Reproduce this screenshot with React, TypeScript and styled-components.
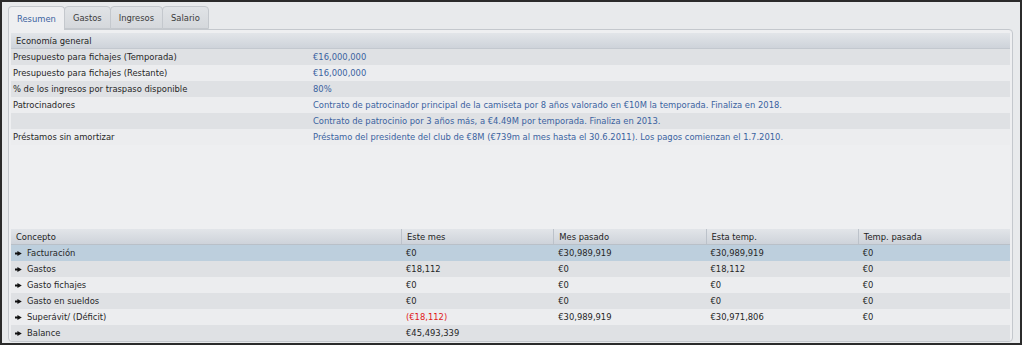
import React from 'react';
import styled, { createGlobalStyle } from 'styled-components';

const GlobalStyle = createGlobalStyle`
  html, body {
    margin: 0;
    padding: 0;
    background: #2b2b2b;
  }
  * {
    box-sizing: border-box;
  }
`;

type InfoItem = { label: string, value: string };

const infoRows: InfoItem[] = [
  { label: 'Presupuesto para fichajes (Temporada)', value: '€16,000,000' },
  { label: 'Presupuesto para fichajes (Restante)', value: '€16,000,000' },
  { label: '% de los ingresos por traspaso disponible', value: '80%' },
  { label: 'Patrocinadores', value: 'Contrato de patrocinador principal de la camiseta por 8 años valorado en €10M la temporada. Finaliza en 2018.' },
  { label: '', value: 'Contrato de patrocinio por 3 años más, a €4.49M por temporada. Finaliza en 2013.' },
  { label: 'Préstamos sin amortizar', value: 'Préstamo del presidente del club de €8M (€739m al mes hasta el 30.6.2011). Los pagos comienzan el 1.7.2010.' },
];

type Concept = { name: string, values: string[], negative?: number[] };

const concepts: Concept[] = [
  { name: 'Facturación', values: ['€0', '€30,989,919', '€30,989,919', '€0'] },
  { name: 'Gastos', values: ['€18,112', '€0', '€18,112', '€0'] },
  { name: 'Gasto fichajes', values: ['€0', '€0', '€0', '€0'] },
  { name: 'Gasto en sueldos', values: ['€0', '€0', '€0', '€0'] },
  { name: 'Superávit/ (Déficit)', values: ['(€18,112)', '€30,989,919', '€30,971,806', '€0'], negative: [0] },
  { name: 'Balance', values: ['€45,493,339', '', '', ''] },
];

const columns = ['Concepto', 'Este mes', 'Mes pasado', 'Esta temp.', 'Temp. pasada'];
const tabs = ['Resumen', 'Gastos', 'Ingresos', 'Salario'];

const Arrow = () => (
  <svg width="7" height="5" viewBox="0 0 7 5">
    <path d="M0 1.4 H2.4 V0 L6.8 2.5 L2.4 5 V3.6 H0 Z" fill="#111" />
  </svg>
);

export default function App() {
  return (
    <Frame>
      <GlobalStyle />
      <TabBar>
        {tabs.map((tab, i) => (
          <Tab key={tab} $active={i === 0}>{tab}</Tab>
        ))}
      </TabBar>
      <Panel>
        <SectionHeader>Economía general</SectionHeader>
        {infoRows.map((row, i) => (
          <InfoRow key={i} $odd={i % 2 === 0}>
            <Label>{row.label}</Label>
            <Value>{row.value}</Value>
          </InfoRow>
        ))}
        <Spacer />
        <HeadRow>
          {columns.map((c) => (
            <HeadCell key={c}>{c}</HeadCell>
          ))}
        </HeadRow>
        {concepts.map((item, i) => (
          <DataRow key={item.name} $odd={i % 2 === 1} $selected={i === 0}>
            <NameCell>
              <Arrow />
              <span>{item.name}</span>
            </NameCell>
            {item.values.map((v, j) => (
              <DataCell key={j} $negative={!!item.negative && item.negative.includes(j)}>{v}</DataCell>
            ))}
          </DataRow>
        ))}
      </Panel>
    </Frame>
  );
}

const Frame = styled.div`
  margin: 2px;
  height: 341px;
  background: #e8eaec;
  padding: 4px 7px 1px 6px;
  display: flex;
  flex-direction: column;
  font-family: "DejaVu Sans", "Noto Sans", sans-serif;
  font-size: 8.4px;
  color: #262626;
`;

const TabBar = styled.div`
  display: flex;
  height: 24px;
  position: relative;
  z-index: 1;
  margin-bottom: -1px;
`;

const Tab = styled.div<{ $active?: boolean }>`
  display: flex;
  align-items: center;
  padding: 0 8px;
  height: ${(p) => (p.$active ? '24px' : '23px')};
  border: 1px solid #c4c8cd;
  border-bottom: ${(p) => (p.$active ? 'none' : '1px solid #c4c8cd')};
  border-radius: 4px 4px 0 0;
  margin-right: -1px;
  background: ${(p) => (p.$active ? '#eeeff1' : 'linear-gradient(#e0e3e6, #d5d8dc)')};
  color: ${(p) => (p.$active ? '#3a62a0' : '#3a3a3a')};
`;

const Panel = styled.div`
  flex: 1;
  display: flex;
  flex-direction: column;
  background: #eeeff1;
  border: 1px solid #c4c8cd;
  border-radius: 0 4px 4px 4px;
  padding: 3px 2px 0 2px;
`;

const SectionHeader = styled.div`
  height: 16px;
  display: flex;
  align-items: center;
  padding-left: 5px;
  background: linear-gradient(#e2e5e9, #ced3da);
  border-bottom: 1px solid #c3c8cf;
  color: #222;
`;

const InfoRow = styled.div<{ $odd?: boolean }>`
  display: grid;
  grid-template-columns: 302px 1fr;
  height: 16px;
  align-items: center;
  background: ${(p) => (p.$odd ? '#dfe1e4' : '#ecedef')};
`;

const Label = styled.div`
  padding-left: 2px;
  white-space: nowrap;
`;

const Value = styled.div`
  color: #3a62a0;
  white-space: nowrap;
`;

const Spacer = styled.div`
  flex: 1;
`;

const HeadRow = styled.div`
  display: grid;
  grid-template-columns: 390px repeat(4, 1fr);
  height: 16px;
  background: linear-gradient(#e2e5e9, #ced3da);
  border-bottom: 1px solid #b9c0c8;
`;

const HeadCell = styled.div`
  display: flex;
  align-items: center;
  padding-left: 5px;
  border-left: 1px solid #bcc2ca;
  color: #222;
  &:first-child {
    border-left: none;
  }
`;

const DataRow = styled.div<{ $odd?: boolean, $selected?: boolean }>`
  display: grid;
  grid-template-columns: 390px repeat(4, 1fr);
  height: 16px;
  align-items: center;
  background: ${(p) => (p.$selected ? '#bdcfdd' : p.$odd ? '#dfe1e4' : '#ecedef')};
`;

const NameCell = styled.div`
  display: flex;
  align-items: center;
  gap: 5px;
  padding-left: 4px;
  white-space: nowrap;
`;

const DataCell = styled.div<{ $negative?: boolean }>`
  padding-left: 5px;
  white-space: nowrap;
  color: ${(p) => (p.$negative ? '#e01818' : '#262626')};
`;
